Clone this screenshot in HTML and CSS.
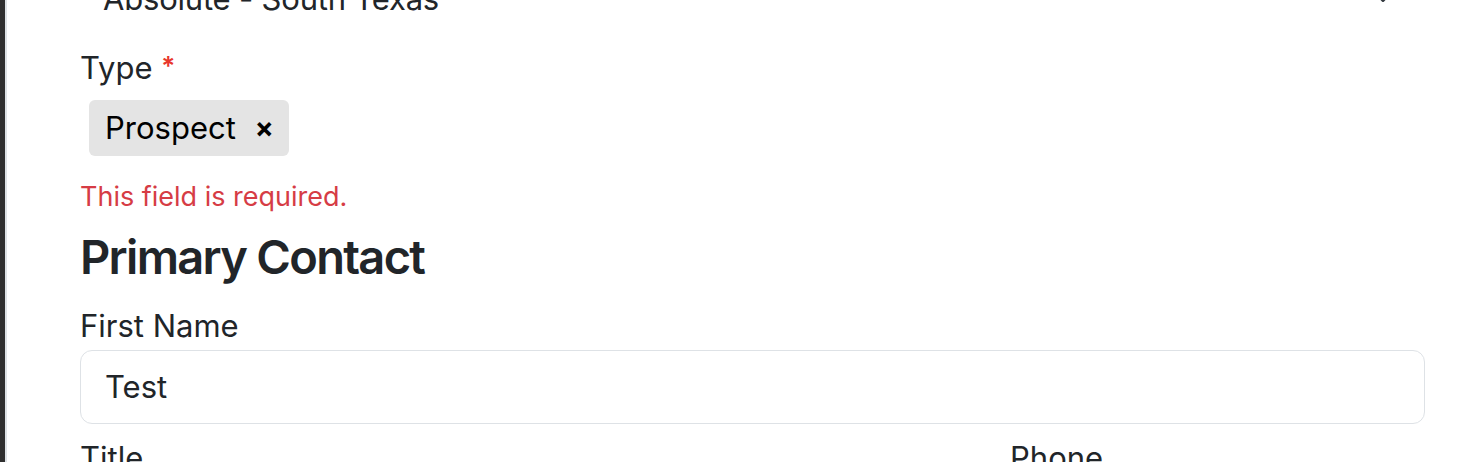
FILE: index.html
```html
<!DOCTYPE html>
<html lang="en">
<head>
<meta charset="utf-8">
<title>Form</title>
<link rel="stylesheet" href="styles.css">
</head>
<body>
<div class="app">
  <div class="rail"></div>
  <main class="content">
    <div class="select">
      <span class="select-value">Absolute - South Texas</span>
      <svg class="chevron" width="20" height="20" viewBox="0 0 16 16" aria-hidden="true"><polyline points="2 5 8 11 14 5" fill="none" stroke="#343a40" stroke-width="2" stroke-linecap="round" stroke-linejoin="round"/></svg>
    </div>

    <div class="field">
      <label class="label first">Type <span class="req">*</span></label>
      <div class="tags">
        <span class="tag">Prospect <span class="tag-x">×</span></span>
      </div>
      <div class="error">This field is required.</div>
    </div>

    <h4 class="heading">Primary Contact</h4>

    <div class="field">
      <label class="label tight">First Name</label>
      <div class="input">Test</div>
    </div>

    <div class="row">
      <div class="col"><label class="label">Title</label></div>
      <div class="col"><label class="label">Phone</label></div>
    </div>
  </main>
</div>
</body>
</html>
```

FILE: styles.css
```css
* { box-sizing: border-box; }
html, body { margin: 0; padding: 0; background: #fff; }
body {
  font-family: Inter, "Noto Sans", "Liberation Sans", sans-serif;
  color: #212529;
  overflow: hidden;
  height: 462px;
}
.app {
  display: flex;
  height: 462px;
  overflow: hidden;
}
.rail {
  width: 7px;
  flex: none;
  background: #2f2f2f;
  border-right: 2px solid #dee2e6;
}
.content {
  flex: 1;
  padding: 0 37px 0 73px;
  min-width: 0;
}
.select {
  height: 74px;
  margin-top: -38px;
  display: flex;
  align-items: center;
  justify-content: space-between;
  padding: 0 32px 0 23px;
  font-size: 31px;
  line-height: 46.5px;
  letter-spacing: -0.2px;
}
.chevron { display: block; margin-top: -4px; }
.label {
  display: block;
  font-size: 31px;
  line-height: 46.5px;
  margin-top: 9px;
}
.label.first { margin-top: 7px; }
.req {
  color: #e8372c;
  font-size: 26px;
  vertical-align: 4px;
  font-weight: 600;
}
.tags {
  display: flex;
  padding: 8px 9px 0;
}
.tag {
  display: inline-flex;
  align-items: center;
  height: 56px;
  line-height: 56px;
  padding: 0 15px 0 16px;
  background: #e4e4e4;
  border-radius: 6px;
  font-size: 31px;
  color: #000;
}
.tag-x {
  font-size: 28px;
  font-weight: 700;
  margin-left: 19px;
}
.error {
  color: #d63c45;
  font-size: 27px;
  line-height: 40.5px;
  margin-top: 21px;
}
.heading {
  margin: 12px 0 0;
  font-size: 47px;
  line-height: 56.4px;
  font-weight: 600;
  letter-spacing: -1.7px;
}
.label.tight { margin-top: 18px; margin-bottom: 0; }
.input {
  height: 74px;
  border: 1px solid #dee2e6;
  border-radius: 12px;
  padding: 0 24px;
  font-size: 31px;
  line-height: 72px;
}
.row {
  display: grid;
  grid-template-columns: minmax(0, 1fr) 415px;
  column-gap: 50px;
  margin-top: 2px;
}
```
